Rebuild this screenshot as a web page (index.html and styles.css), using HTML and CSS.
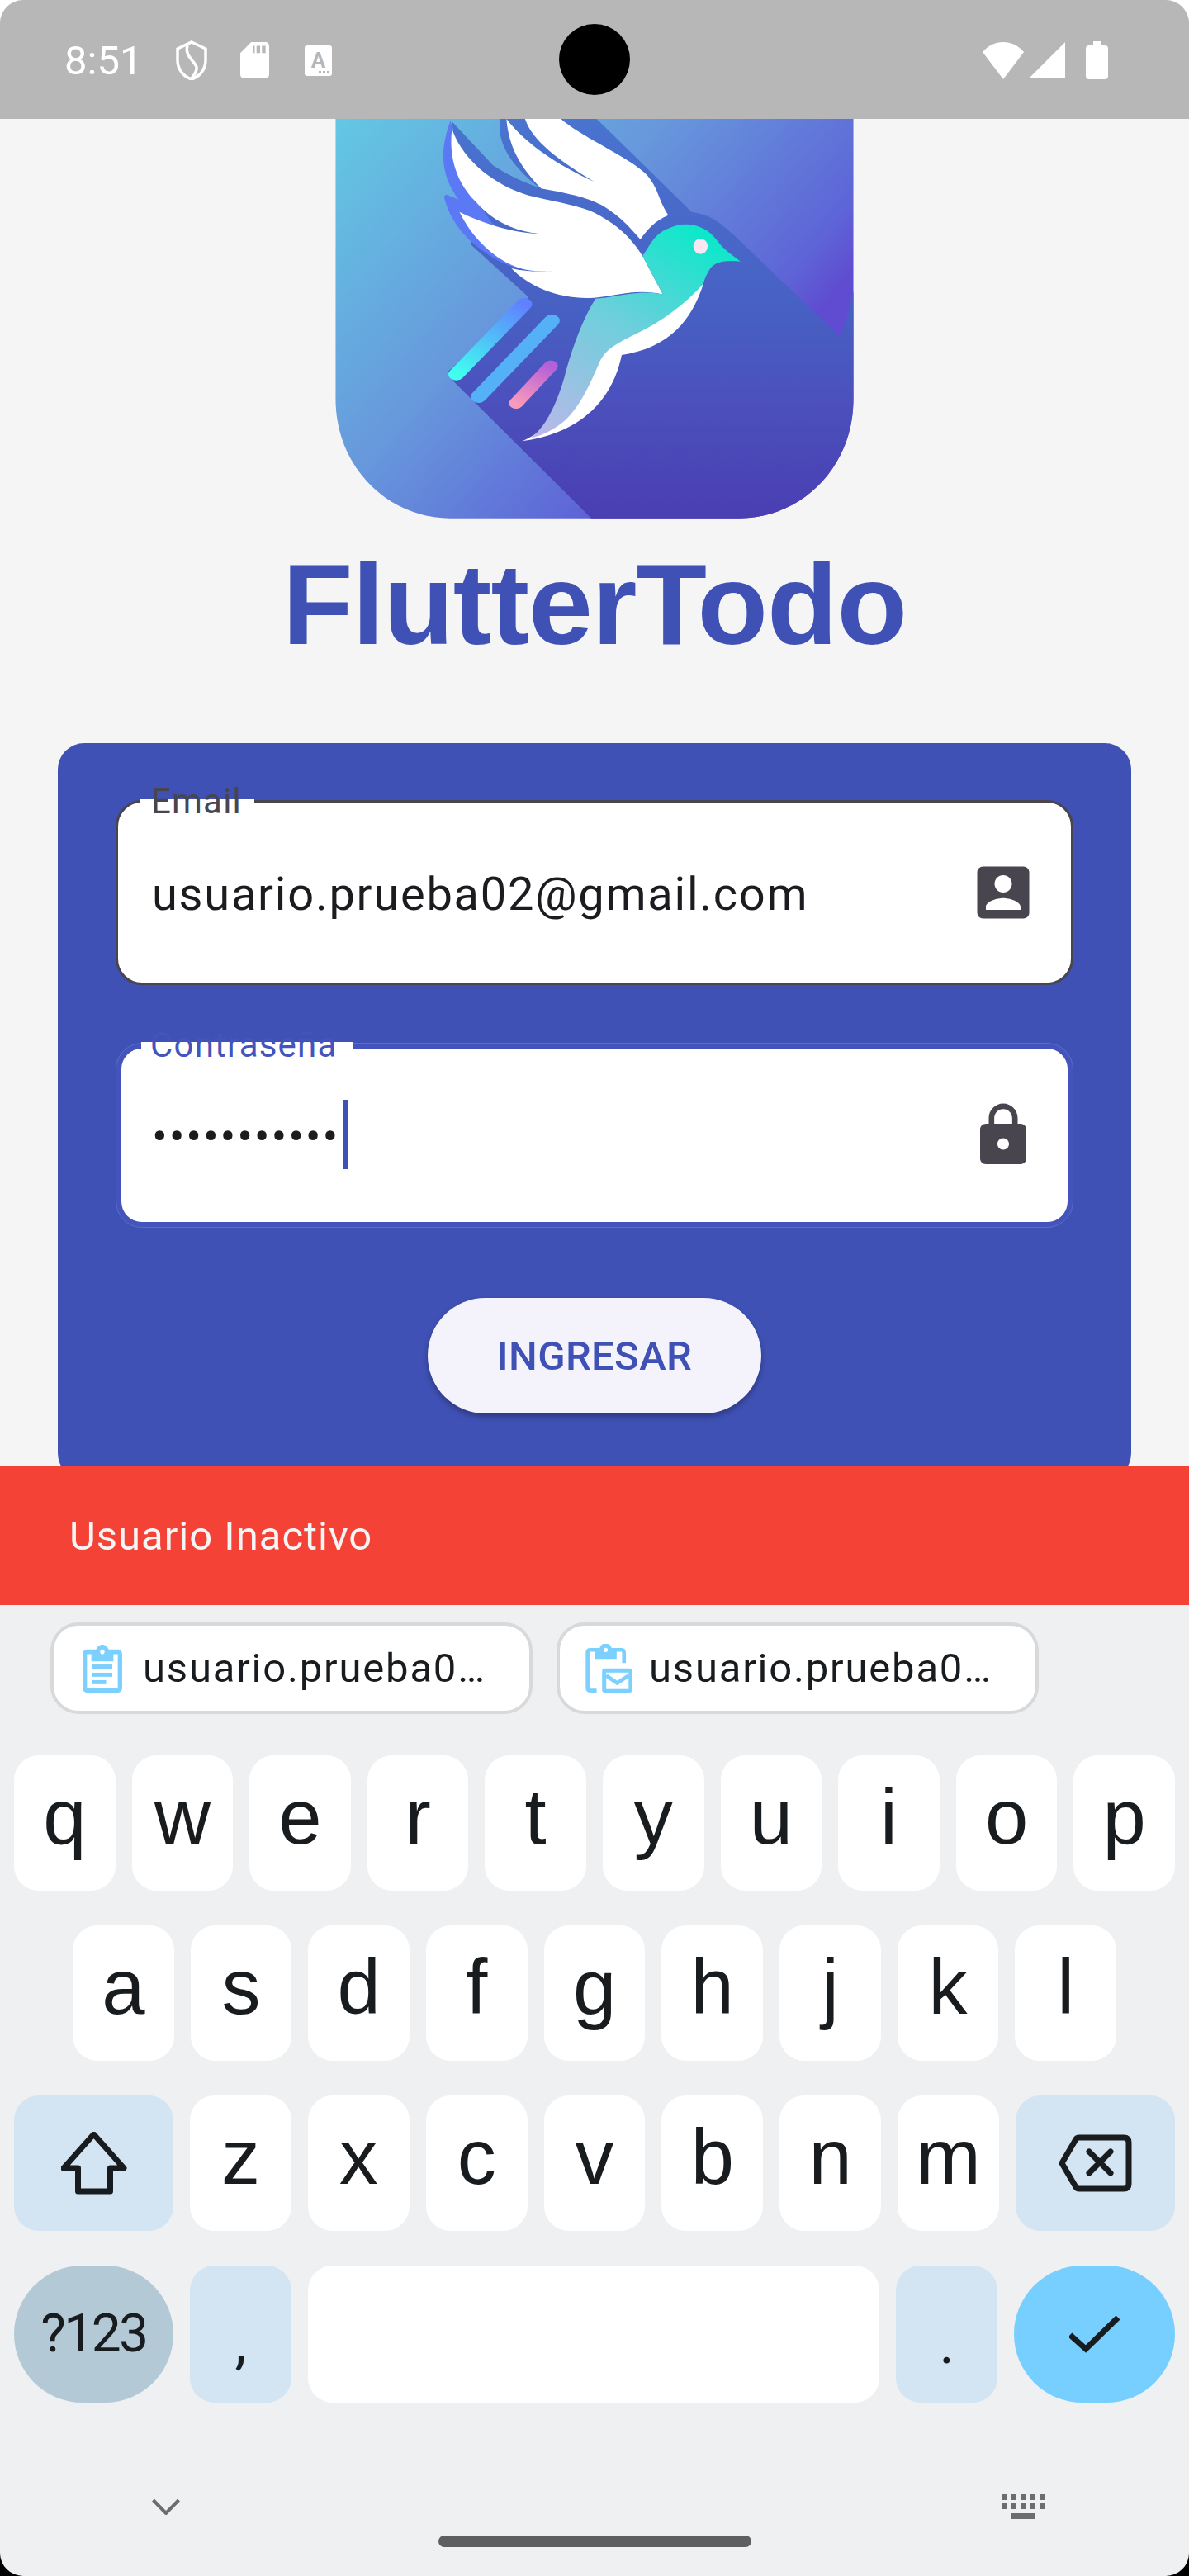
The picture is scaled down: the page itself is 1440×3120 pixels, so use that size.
FILE: index.html
```html
<!DOCTYPE html>
<html lang="es">
<head>
<meta charset="utf-8">
<title>FlutterTodo</title>
<link rel="stylesheet" href="styles.css">
</head>
<body>
<div class="screen">
  <header class="statusbar">
    <div class="status-left">
      <span class="time">8:51</span>
      <svg class="ic-shield" viewBox="0 0 38 48" width="38" height="48"><path d="M19 2 L36 10 V24 C36 36 28 44 19 47 C10 44 2 36 2 24 V10 Z" fill="none" stroke="#fff" stroke-width="3.5"/><path d="M14 6 C10 18 22 24 25 32 C26 38 22 42 19 46" fill="none" stroke="#fff" stroke-width="3.5"/></svg>
      <svg class="ic-sd" viewBox="4 2 16 20" width="35" height="44" preserveAspectRatio="none"><path fill="#fff" d="M18 2h-8L4.02 8 4 20c0 1.1.9 2 2 2h12c1.1 0 2-.9 2-2V4c0-1.1-.9-2-2-2zm-6 6h-1V4h1v4zm3 0h-2V4h2v4zm3 0h-2V4h2v4z"/></svg>
      <svg class="ic-a" viewBox="0 0 33 37" width="33" height="37"><rect width="33" height="37" rx="3" fill="#fff"/><text x="16.5" y="27" text-anchor="middle" class="ic-a-text">A</text><rect x="17" y="31" width="3" height="3" fill="#b7b7b7"/><rect x="22" y="31" width="3" height="3" fill="#b7b7b7"/><rect x="27" y="31" width="3" height="3" fill="#b7b7b7"/></svg>
    </div>
    <div class="camera"></div>
    <div class="status-right">
      <svg viewBox="0 0 52 45" width="52" height="45"><path fill="#fff" d="M26 45 L1 12 C8 4 16 0 26 0 C36 0 44 4 51 12 Z"/></svg>
      <svg class="ic-signal" viewBox="0 0 44 44" width="44" height="44"><path fill="#fff" d="M44 0 V44 H0 Z"/></svg>
      <svg class="ic-battery" viewBox="0 0 27 46" width="27" height="46"><path fill="#fff" d="M9 0 H18 V5 H23 Q27 5 27 9 V42 Q27 46 23 46 H4 Q0 46 0 42 V9 Q0 5 4 5 H9Z"/></svg>
    </div>
  </header>

  <main class="content">
    <svg class="logo" viewBox="0 12 1568 1488" preserveAspectRatio="none">
      <defs>
        <linearGradient id="lbg" gradientUnits="userSpaceOnUse" x1="61" y1="12" x2="1321" y2="852">
          <stop offset="0" stop-color="#63c8e3"/><stop offset=".5" stop-color="#6798dc"/><stop offset=".9" stop-color="#5e65d7"/><stop offset="1" stop-color="#5f4cd0"/>
        </linearGradient>
        <linearGradient id="lsh" gradientUnits="userSpaceOnUse" x1="0" y1="12" x2="0" y2="1463">
          <stop offset="0" stop-color="#4974d0"/><stop offset=".48" stop-color="#4760c3"/><stop offset=".68" stop-color="#4b52be"/><stop offset="1" stop-color="#4a3eb2"/>
        </linearGradient>
        <linearGradient id="lbody" gradientUnits="userSpaceOnUse" x1="1150" y1="480" x2="620" y2="1160">
          <stop offset="0" stop-color="#0de8ca"/><stop offset=".45" stop-color="#6ccfdc"/><stop offset="1" stop-color="#bab8e8"/>
        </linearGradient>
        <linearGradient id="lb1" gradientUnits="userSpaceOnUse" x1="588" y1="685" x2="398" y2="940">
          <stop offset="0" stop-color="#6080ff"/><stop offset="1" stop-color="#40fff0"/>
        </linearGradient>
        <linearGradient id="lb3" gradientUnits="userSpaceOnUse" x1="662" y1="910" x2="565" y2="1045">
          <stop offset="0" stop-color="#b460d8"/><stop offset="1" stop-color="#f89abb"/>
        </linearGradient>
      </defs>
      <path fill="url(#lbg)" d="M61 12 H1507 V1030 C1507 1280 1360 1463 1190 1463 H380 C210 1463 61 1280 61 1030 Z"/>
      <path fill="url(#lsh)" d="M520 12 H790 L1055 350 C1110 360 1130 385 1170 430 L1470 805 C1490 740 1495 700 1507 640 V1030 C1507 1280 1360 1463 1190 1463 H775 L390 965 L375 930 L600 660 L440 470 L385 20 L500 180 C540 215 590 245 630 262 C560 190 510 110 520 12 Z"/>
      <path fill="#5b78f5" d="M382 18 C350 130 355 220 405 305 L372 288 Q362 288 365 302 C385 400 440 470 500 515 C560 565 630 572 690 560 L560 500 L420 250 Z"/>
      <path fill="#fff" d="M538 12 C545 120 580 190 635 265 C720 285 770 300 810 330 C860 370 885 410 912 450 C930 415 955 380 990 362 C960 300 965 270 930 215 C880 150 750 80 690 12 H590 C610 90 680 160 783 240 C680 180 590 100 538 12 Z"/>
      <path fill="#fff" d="M386 50 C378 130 390 230 450 310 C500 385 560 420 632 430 C550 425 470 390 407 350 C440 440 510 540 600 562 C630 568 660 566 690 560 C650 568 600 570 552 555 C600 620 680 665 770 663 C830 660 900 625 975 650 L918 510 C880 430 830 380 770 345 C720 320 660 310 600 290 C510 255 420 170 386 50 Z"/>
      <path fill="#fff" d="M1088 612 C1060 720 1010 840 860 870 C840 1000 770 1150 582 1183 C640 1150 690 1100 720 900 L900 760 Z"/>
      <path fill="url(#lbody)" d="M918 510 C940 470 950 430 990 410 C1030 385 1090 385 1130 460 C1140 480 1165 505 1192 530 C1150 525 1120 530 1105 560 C1095 580 1090 600 1088 612 C1040 680 980 740 920 780 C860 820 820 840 800 890 C770 980 740 1070 690 1120 C660 1150 630 1165 605 1172 C650 1130 680 1040 700 950 C720 850 750 740 787 665 C850 660 910 630 975 650 Z"/>
      <ellipse cx="1080" cy="475" rx="20" ry="28" fill="#f8e6f3"/>
      <path d="M588 685 L398 940" stroke="url(#lb1)" stroke-width="44" stroke-linecap="round" fill="none"/>
      <path d="M665 745 L460 1022" stroke="#54b0f7" stroke-width="44" stroke-linecap="round" fill="none"/>
      <path d="M662 910 L565 1045" stroke="url(#lb3)" stroke-width="40" stroke-linecap="round" fill="none"/>
    </svg>
    <div class="wordmark">FlutterTodo</div>

    <section class="card">
      <div class="field field-idle">
        <span class="gap gap-email"></span>
        <span class="label label-email">Email</span>
        <span class="value">usuario.prueba02@gmail.com</span>
        <svg class="field-icon" viewBox="0 0 24 24"><path d="M3 5v14a2 2 0 0 0 2 2h14c1.1 0 2-.9 2-2V5c0-1.1-.9-2-2-2H5a2 2 0 0 0-2 2zm12 4c0 1.66-1.34 3-3 3s-3-1.34-3-3 1.34-3 3-3 3 1.34 3 3zm-9 8c0-2 4-3.1 6-3.1s6 1.1 6 3.1v1H6v-1z"/></svg>
      </div>
      <div class="field field-focus">
        <span class="gap gap-pass"></span>
        <span class="label label-pass">Contraseña</span>
        <span class="value">•••••••••••</span>
        <span class="caret"></span>
        <svg class="field-icon" viewBox="0 0 24 24"><path d="M18 8h-1V6c0-2.76-2.24-5-5-5S7 3.24 7 6v2H6c-1.1 0-2 .9-2 2v10c0 1.1.9 2 2 2h12c1.1 0 2-.9 2-2V10c0-1.1-.9-2-2-2zm-6 9c-1.1 0-2-.9-2-2s.9-2 2-2 2 .9 2 2-.9 2-2 2zm3.1-9H8.9V6c0-1.71 1.39-3.1 3.1-3.1 1.71 0 3.1 1.39 3.1 3.1v2z"/></svg>
      </div>
      <button class="submit">INGRESAR</button>
    </section>
  </main>

  <div class="snackbar">Usuario Inactivo</div>

  <section class="keyboard">
    <div class="chips">
      <div class="chip">
        <svg class="chip-icon1" viewBox="3 1 18 20" preserveAspectRatio="none"><path d="M19 3h-4.18C14.4 1.84 13.3 1 12 1c-1.3 0-2.4.84-2.82 2H5c-1.1 0-2 .9-2 2v14c0 1.1.9 2 2 2h14c1.1 0 2-.9 2-2V5c0-1.1-.9-2-2-2zm-7 0c.55 0 1 .45 1 1s-.45 1-1 1-1-.45-1-1 .45-1 1-1zm7 16H5V5h2v3h10V5h2v14z"/><rect x="7.5" y="9.3" width="9" height="1.7"/><rect x="7.5" y="12.7" width="9" height="1.7"/><rect x="7.5" y="15.8" width="6.2" height="1.7"/></svg>
        <span class="chip-text">usuario.prueba0…</span>
      </div>
      <div class="chip">
        <svg class="chip-icon2" viewBox="85 60 170 178">
          <path class="stroke-clip" d="M125 231 H102 Q92 231 92 221 V92 Q92 82 102 82 H215 Q225 82 225 92 V130"/>
          <path class="fill-clip" d="M118 78 H136 C138 52 178 52 180 78 H198 V115 H118 Z"/>
          <circle cx="158" cy="82" r="8" fill="#fff"/>
          <rect x="145" y="150" width="110" height="88" rx="10" class="fill-clip"/>
          <rect x="160" y="165" width="82" height="60" fill="#fff"/>
          <path class="stroke-clip" d="M160 176 L200 203 L242 176"/>
        </svg>
        <span class="chip-text">usuario.prueba0…</span>
      </div>
    </div>
    <div class="rows">
      <div class="row">
        <div class="key">q</div><div class="key">w</div><div class="key">e</div><div class="key">r</div><div class="key">t</div><div class="key">y</div><div class="key">u</div><div class="key">i</div><div class="key">o</div><div class="key">p</div>
      </div>
      <div class="row row-home">
        <div class="key">a</div><div class="key">s</div><div class="key">d</div><div class="key">f</div><div class="key">g</div><div class="key">h</div><div class="key">j</div><div class="key">k</div><div class="key">l</div>
      </div>
      <div class="row">
        <div class="key key-wide key-fn">
          <svg viewBox="0 0 80 76" width="80" height="76"><path class="kbd-stroke" d="M39.5 3 L76 44 H59.5 V72 H20.5 V44 H3 Z"/></svg>
        </div>
        <div class="key">z</div><div class="key">x</div><div class="key">c</div><div class="key">v</div><div class="key">b</div><div class="key">n</div><div class="key">m</div>
        <div class="key key-wide key-fn">
          <svg viewBox="0 0 88 70" width="88" height="70"><path class="kbd-stroke" d="M3 35 L20 6 Q21 4 24 4 H78 Q84 4 84 10 V60 Q84 66 78 66 H24 Q21 66 20 64 Z"/><path class="kbd-stroke" d="M36 21 L62 47 M62 21 L36 47"/></svg>
        </div>
      </div>
      <div class="row row-last">
        <div class="key key-wide key-mode">?123</div>
        <div class="key key-fn key-punct">,</div>
        <div class="key key-space"></div>
        <div class="key key-fn key-punct">.</div>
        <div class="key key-wide key-done">
          <svg viewBox="0 0 61 46" width="61" height="46"><path class="kbd-stroke-miter" d="M1 24 L20 41 L59 3"/></svg>
        </div>
      </div>
    </div>
    <div class="nav-icons">
      <svg viewBox="0 0 34 20" width="34" height="20"><path d="M1.5 2 L17 18 L32.5 2" fill="none" stroke="#6d6d6d" stroke-width="4"/></svg>
      <svg class="nav-kbd" viewBox="0 0 53 30" width="53" height="30">
        <rect x="0" y="0" width="6" height="7"/><rect x="12" y="0" width="6" height="7"/><rect x="24" y="0" width="6" height="7"/><rect x="35" y="0" width="6" height="7"/><rect x="47" y="0" width="6" height="7"/>
        <rect x="0" y="11" width="6" height="7"/><rect x="12" y="11" width="6" height="7"/><rect x="24" y="11" width="6" height="7"/><rect x="35" y="11" width="6" height="7"/><rect x="47" y="11" width="6" height="7"/>
        <rect x="12" y="23" width="29" height="7"/>
      </svg>
    </div>
    <div class="home-pill"></div>
  </section>
</div>
</body>
</html>
```

FILE: styles.css
```css
* { box-sizing: border-box; }
html, body { margin: 0; padding: 0; }
body {
  width: 1440px;
  height: 3120px;
  overflow: hidden;
  background: linear-gradient(#ffffff 50%, #000000 50%);
  font-family: "Roboto", "Liberation Sans", sans-serif;
}
.screen {
  width: 1440px;
  height: 3120px;
  display: flex;
  flex-direction: column;
  border-radius: 28px;
  overflow: hidden;
}

/* status bar */
.statusbar {
  height: 144px;
  flex: none;
  background: #b7b7b7;
  display: grid;
  grid-template-columns: 1fr 86px 1fr;
  align-items: center;
  padding-top: 2px;
}
.status-left { display: flex; align-items: center; padding-left: 78px; }
.time { width: 87px; font-size: 49px; line-height: 1; color: #fff; letter-spacing: 0; white-space: nowrap; }
.ic-shield { margin-left: 48px; }
.ic-sd { margin-left: 40px; }
.ic-a { margin-left: 43px; }
.ic-a-text { font: 700 26px "Roboto", sans-serif; fill: #b7b7b7; }
.camera { width: 86px; height: 86px; border-radius: 50%; background: #000; margin-top: -2px; }
.status-right { display: flex; align-items: center; justify-content: flex-end; padding-right: 98px; }
.ic-signal { margin-left: 5px; }
.ic-battery { margin-left: 25px; }

/* content */
.content {
  height: 1632px;
  flex: none;
  background: #f5f5f5;
  overflow: hidden;
}
.logo { display: block; width: 680px; height: 496px; margin: 0 auto; }
.wordmark {
  height: 260px;
  padding-top: 22px;
  text-align: center;
  font-family: "Liberation Sans", sans-serif;
  font-weight: 700;
  font-size: 140px;
  line-height: 140px;
  letter-spacing: -1px;
  color: #3f51b5;
}
.card {
  width: 1300px;
  height: 892px;
  margin: 0 auto;
  padding: 69px 70px 0;
  background: #3f51b5;
  border-radius: 32px;
  display: flex;
  flex-direction: column;
  align-items: stretch;
}
.field {
  position: relative;
  height: 224px;
  background: #fff;
  border-radius: 32px;
  display: flex;
  align-items: center;
}
.field + .field { margin-top: 70px; }
.field-idle { border: 3px solid #49454f; padding: 3px 40px 0 41px; }
.field-focus { border: 7px solid #4355bc; outline: 1px solid #5a6cc8; outline-offset: -1px; padding: 3px 36px 0 37px; }
.gap { position: absolute; background: #fff; }
.gap-email { top: -4px; left: 26px; width: 139px; height: 5px; }
.gap-pass { top: -8px; left: 24px; width: 256px; height: 8px; }
.label { position: absolute; font-size: 42px; line-height: 42px; letter-spacing: 1.2px; white-space: nowrap; }
.label-email { top: -22px; left: 40px; color: #49454f; }
.label-pass { top: -25px; left: 35px; color: #4355bc; }
.value { font-size: 56px; line-height: 1; letter-spacing: 1.75px; color: #1c1b1f; white-space: nowrap; }
.caret { width: 6px; height: 84px; margin: -6px 0 0 5px; background: #3f51b5; }
.field-icon { width: 84px; height: 84px; margin-left: auto; margin-top: -3px; fill: #49454f; flex: none; }
.submit {
  align-self: center;
  margin-top: 85px;
  width: 404px;
  height: 140px;
  border: 0;
  border-radius: 70px;
  background: #f4f2fb;
  color: #3f51b5;
  font-family: "Roboto", sans-serif;
  font-weight: 500;
  font-size: 49px;
  letter-spacing: .35px;
  box-shadow: 0 4px 7px rgba(0, 0, 0, .3);
}

/* snackbar */
.snackbar {
  height: 168px;
  flex: none;
  background: #f44336;
  color: #f5f5f5;
  padding-left: 84px;
  display: flex;
  align-items: center;
  font-size: 49px;
  line-height: 1;
  letter-spacing: 1px;
}

/* keyboard */
.keyboard {
  flex: 1;
  background: #eff0f2;
  padding-top: 21px;
}
.chips { display: flex; gap: 29px; padding-left: 61px; }
.chip {
  width: 584px;
  height: 111px;
  background: #fff;
  border: 4px solid #d8d9db;
  border-radius: 34px;
  display: flex;
  align-items: center;
  padding-left: 35px;
  gap: 25px;
}
.chip + .chip { padding-left: 31px; gap: 20px; }
.chip-icon1 { width: 48px; height: 58px; fill: #7bd0ff; flex: none; }
.chip-icon2 { width: 57px; height: 59px; flex: none; }
.fill-clip { fill: #7bd0ff; }
.stroke-clip { fill: none; stroke: #7bd0ff; stroke-width: 14; }
.chip-text { font-size: 49px; line-height: 1; letter-spacing: 1.8px; color: #191c1e; white-space: nowrap; }
.rows {
  margin-top: 50px;
  padding: 0 17px;
  display: flex;
  flex-direction: column;
  gap: 42px;
}
.row { display: flex; gap: 20px; height: 164px; }
.row-home { padding: 0 71px; }
.row-last { height: 166px; }
.key {
  flex: 1 1 0;
  min-width: 0;
  background: #fff;
  border-radius: 30px;
  display: flex;
  align-items: center;
  justify-content: center;
  padding-bottom: 14px;
  font-family: "Liberation Sans", sans-serif;
  font-size: 94px;
  line-height: 1;
  color: #191c1e;
}
.key-wide { flex: 0 0 193px; padding-bottom: 0; }
.key-fn { background: #d3e4f3; }
.key-mode {
  border-radius: 83px;
  background: #b3c9d6;
  font-family: "Roboto", sans-serif;
  font-size: 64px;
  letter-spacing: -2.5px;
}
.key-done { flex-basis: 195px; border-radius: 83px; background: #76cfff; }
.key-space { flex: 1 1 auto; }
.key-punct {
  flex: 0 0 122.6px;
  font-family: "Roboto", sans-serif;
  font-size: 70px;
  padding-bottom: 0;
  padding-top: 22px;
}
.kbd-stroke { fill: none; stroke: #191c1e; stroke-width: 7; stroke-linejoin: round; stroke-linecap: round; }
.kbd-stroke-miter { fill: none; stroke: #191c1e; stroke-width: 7; }
.nav-icons {
  margin-top: 111px;
  height: 30px;
  padding: 0 174px 0 184px;
  display: flex;
  align-items: center;
  justify-content: space-between;
}
.nav-kbd { fill: #6d6d6d; }
.home-pill {
  width: 379px;
  height: 14px;
  margin: 20px auto 0;
  border-radius: 7px;
  background: #5f5f5f;
}
```
